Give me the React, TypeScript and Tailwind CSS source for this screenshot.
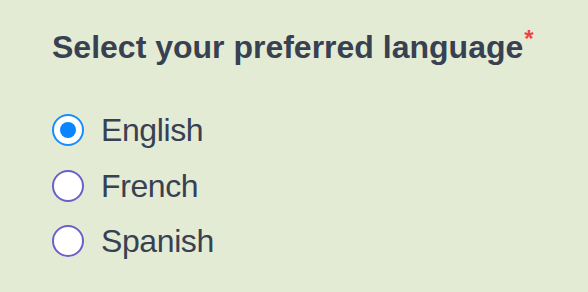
import React, { useState } from "react";

const options = ["English", "French", "Spanish"];

export default function App() {
  const [value, setValue] = useState("English");
  return (
    <div
      className="w-[588px] h-[292px] bg-[#e4ebd5] pl-[52px] pt-[27px]"
      style={{ fontFamily: '"Liberation Sans", Arial, sans-serif' }}
    >
      <h1 className="text-[32px] leading-[40px] font-bold text-[#374151]">
        Select your preferred language
        <span className="text-[#ef4444] text-[24px] leading-none align-[11px] ml-[1px]">*</span>
      </h1>
      <div className="mt-[43px] flex flex-col gap-[15.5px]">
        {options.map((o) => {
          const checked = value === o;
          return (
            <label key={o} className="flex items-center gap-[17px] h-[40px] cursor-pointer" onClick={() => setValue(o)}>
              <span
                className={
                  checked
                    ? "w-[32px] h-[32px] rounded-full border-[2.5px] border-[#1a8cff] bg-white flex items-center justify-center"
                    : "w-[32px] h-[32px] rounded-full border-[2.5px] border-[#6b5fc9] bg-white flex items-center justify-center"
                }
              >
                {checked && <span className="w-[16px] h-[16px] rounded-full bg-[#0a84ff]" />}
              </span>
              <span className="text-[32px] leading-[40px] text-[#374151] tracking-[-0.4px]">{o}</span>
            </label>
          );
        })}
      </div>
    </div>
  );
}
